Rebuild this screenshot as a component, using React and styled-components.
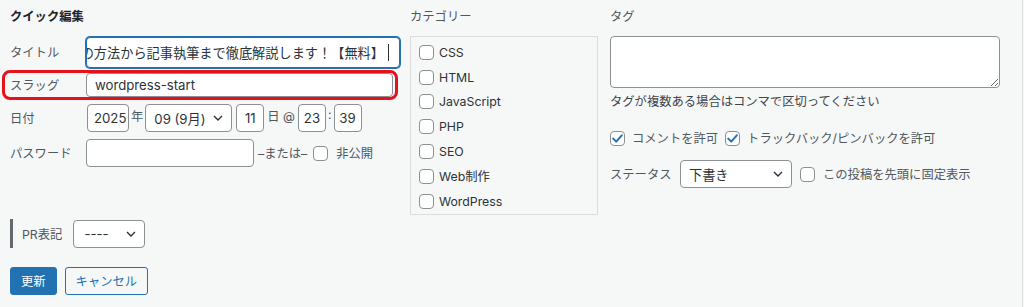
import React from 'react';
import styled, { createGlobalStyle } from 'styled-components';

const GlobalStyle = createGlobalStyle`
  html, body {
    margin: 0;
    padding: 0;
    background: #f6f7f7;
  }
  body {
    font-family: Inter, "Noto Sans CJK JP", sans-serif;
    color: #50575e;
  }
  * {
    box-sizing: border-box;
  }
`;

const Page = styled.div`
  width: 1023px;
  height: 307px;
  border-right: 1px solid #dcdcde;
  display: flex;
  padding-left: 10px;
  font-size: 12.3px;
`;

const Column = styled.div`
  width: ${({ $w }) => $w}px;
  margin-right: ${({ $gap }) => $gap || 0}px;
  display: flex;
  flex-direction: column;
`;

const Heading = styled.div`
  height: 20px;
  line-height: 20px;
  margin: 7px 0 9px;
  font-weight: ${({ $bold }) => ($bold ? 700 : 400)};
  color: ${({ $bold }) => ($bold ? '#1d2327' : '#50575e')};
`;

const Row = styled.div`
  display: flex;
  align-items: center;
  height: ${({ $h }) => $h || 28}px;
  margin-top: ${({ $mt }) => $mt || 0}px;
`;

const HighlightRow = styled(Row)`
  margin-left: -8px;
  margin-right: 2px;
  padding: 0 2px 0 5px;
  border: 3.5px solid #e8101a;
  border-radius: 8px;
`;

const Label = styled.span`
  width: ${({ $w }) => $w || 76}px;
  flex-shrink: 0;
  color: #50575e;
`;

const TextBox = styled.div`
  height: ${({ $h }) => $h || 28}px;
  width: ${({ $w }) => ($w ? `${$w}px` : 'auto')};
  flex: ${({ $w }) => ($w ? '0 0 auto' : '1')};
  min-width: 0;
  background: #fff;
  border: 1px solid ${({ $focus }) => ($focus ? '#2271b1' : '#8c8f94')};
  box-shadow: ${({ $focus }) => ($focus ? '0 0 0 1px #2271b1' : 'none')};
  border-radius: 4px;
  padding: 0 ${({ $pad }) => ($pad !== undefined ? $pad : 8)}px;
  display: flex;
  align-items: center;
  justify-content: ${({ $align }) => $align || 'flex-start'};
  overflow: hidden;
  white-space: nowrap;
  font-size: 13.2px;
  color: #2c3338;
`;

const ScrolledText = styled.span`
  flex-shrink: 0;
`;

const Caret = styled.span`
  display: inline-block;
  width: 1px;
  height: 17px;
  background: #2c3338;
  margin-left: 4px;
  flex-shrink: 0;
`;

const Unit = styled.span`
  margin: 0 ${({ $m }) => ($m !== undefined ? $m : 3)}px;
  color: #50575e;
  align-self: ${({ $center }) => ($center ? 'center' : 'flex-start')};
  margin-top: ${({ $center }) => ($center ? 0 : 3)}px;
`;

const SelectBox = styled.div`
  width: ${({ $w }) => $w}px;
  height: 28px;
  background: #fff;
  border: 1px solid #8c8f94;
  border-radius: 4px;
  padding: 0 8px 0 ${({ $pl }) => $pl || 8}px;
  display: flex;
  align-items: center;
  justify-content: space-between;
  font-size: 13.2px;
  color: #2c3338;
  flex-shrink: 0;
  margin-left: ${({ $ml }) => $ml || 0}px;
`;

const Chevron = () => (
  <svg width="10" height="6" viewBox="0 0 10 6">
    <path d="M1 1l4 4 4-4" fill="none" stroke="#2c3338" strokeWidth="1.4" />
  </svg>
);

const Box = styled.span`
  width: 15px;
  height: 15px;
  flex-shrink: 0;
  border: 1px solid #8c8f94;
  border-radius: 4px;
  background: #fff;
  display: inline-flex;
  align-items: center;
  justify-content: center;
`;

const Check = styled.label`
  display: flex;
  align-items: center;
  gap: ${({ $gap }) => $gap || 7}px;
  margin-right: ${({ $mr }) => $mr || 0}px;
  margin-left: ${({ $ml }) => $ml || 0}px;
  color: ${({ $dark }) => ($dark ? '#2c3338' : '#50575e')};
  white-space: nowrap;
`;

function Checkbox({ checked, label, gap, mr, ml, dark }) {
  return (
    <Check $gap={gap} $mr={mr} $ml={ml} $dark={dark}>
      <Box>
        {checked && (
          <svg width="11" height="9" viewBox="0 0 11 9">
            <path d="M1.2 4.6l3 3L9.8 1.3" fill="none" stroke="#2271b1" strokeWidth="2" strokeLinecap="round" strokeLinejoin="round" />
          </svg>
        )}
      </Box>
      {label}
    </Check>
  );
}

const PrRow = styled(Row)`
  border-left: 3px solid #646970;
  padding-left: 9px;
  height: 29px;
  gap: 11px;
`;

const Buttons = styled.div`
  display: flex;
  gap: 8px;
  margin-top: 19px;
`;

const Button = styled.button`
  height: 28px;
  padding: 0 10px;
  border-radius: 3px;
  font-family: inherit;
  font-size: 12.3px;
  border: 1px solid #2271b1;
  background: ${({ $primary }) => ($primary ? '#2271b1' : '#f6f7f7')};
  color: ${({ $primary }) => ($primary ? '#fff' : '#2271b1')};
`;

const CategoryList = styled.ul`
  list-style: none;
  margin: 0;
  padding: 3px 8px 2px;
  height: 179px;
  border: 1px solid #dcdcde;
  li {
    height: 24.8px;
    display: flex;
    align-items: center;
  }
`;

const TagArea = styled.textarea`
  width: 390px;
  height: 52px;
  border: 1px solid #8c8f94;
  border-radius: 4px;
  background: #fff;
  font-family: inherit;
  margin: 0;
`;

const Hint = styled.div`
  margin-top: 6px;
  line-height: 16px;
  color: #3c434a;
`;

const categories = ['CSS', 'HTML', 'JavaScript', 'PHP', 'SEO', 'Web制作', 'WordPress'];

export default function App() {
  return (
    <>
      <GlobalStyle />
      <Page>
        <Column $w={390} $gap={10}>
          <Heading $bold>クイック編集</Heading>
          <Row $h={32}>
            <Label>タイトル</Label>
            <TextBox $h={31} $focus $align="flex-end" style={{ paddingRight: 10 }}>
              <ScrolledText>WordPressブログの始め方｜サーバー契約の方法から記事執筆まで徹底解説します！【無料】</ScrolledText>
              <Caret />
            </TextBox>
          </Row>
          <HighlightRow $h={30} $mt={2}>
            <Label>スラッグ</Label>
            <TextBox $h={24}>wordpress-start</TextBox>
          </HighlightRow>
          <Row $mt={4}>
            <Label $w={77}>日付</Label>
            <TextBox $w={42} $pad={6}>2025</TextBox>
            <Unit $m={2}>年</Unit>
            <SelectBox $w={87}>
              09 (9月)
              <Chevron />
            </SelectBox>
            <TextBox $w={28} $pad={0} $align="center" style={{ marginLeft: 4 }}>11</TextBox>
            <Unit $m={3}>日 @</Unit>
            <TextBox $w={28} $pad={0} $align="center">23</TextBox>
            <Unit $m={2}>:</Unit>
            <TextBox $w={28} $pad={0} $align="center">39</TextBox>
          </Row>
          <Row $mt={7}>
            <Label>パスワード</Label>
            <TextBox $w={168} />
            <Unit $m={4} $center>–または–</Unit>
            <Checkbox label="非公開" gap={8} ml={2} />
          </Row>
          <PrRow $mt={52}>
            <span>PR表記</span>
            <SelectBox $w={72} $pl={10}>
              ----
              <Chevron />
            </SelectBox>
          </PrRow>
          <Buttons>
            <Button $primary>更新</Button>
            <Button>キャンセル</Button>
          </Buttons>
        </Column>

        <Column $w={188} $gap={12}>
          <Heading>カテゴリー</Heading>
          <CategoryList>
            {categories.map((c) => (
              <li key={c}>
                <Checkbox label={c} gap={5} dark />
              </li>
            ))}
          </CategoryList>
        </Column>

        <Column $w={390}>
          <Heading>タグ</Heading>
          <TagArea />
          <Hint>タグが複数ある場合はコンマで区切ってください</Hint>
          <Row $h={20} $mt={18}>
            <Checkbox checked label="コメントを許可" mr={7} />
            <Checkbox checked label="トラックバック/ピンバックを許可" />
          </Row>
          <Row $mt={12}>
            <Label $w={70}>ステータス</Label>
            <SelectBox $w={112}>
              下書き
              <Chevron />
            </SelectBox>
            <Checkbox label="この投稿を先頭に固定表示" gap={8} ml={8} />
          </Row>
        </Column>
      </Page>
    </>
  );
}
